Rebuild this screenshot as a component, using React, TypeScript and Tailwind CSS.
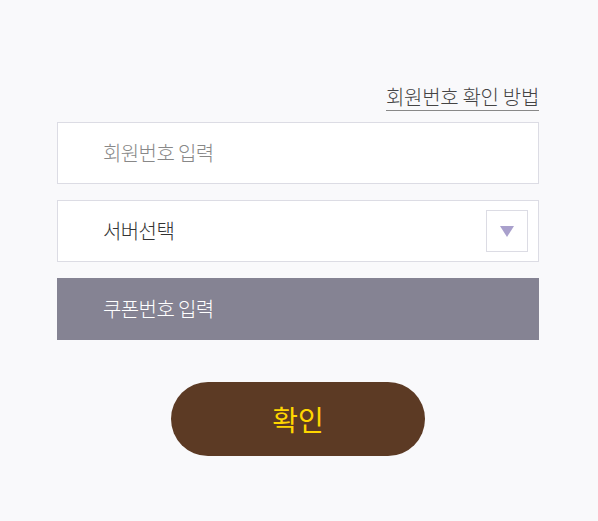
import React from "react";

export default function App() {
  return (
    <div
      className="min-h-[521px] w-full bg-[#f9f9fb] pt-[84px]"
      style={{ fontFamily: '"Noto Sans CJK KR", "Noto Sans", sans-serif' }}
    >
      <div className="ml-[57px] w-[482px] font-light">
        <div className="flex justify-end">
          <a className="border-b border-[#888] pb-[1px] text-[20px] leading-[25px] tracking-[-0.3px] text-[#444]">
            회원번호 확인 방법
          </a>
        </div>
        <div className="mt-[11px] flex h-[62px] items-center border border-[#dcdce4] bg-white pl-[45px] text-[20px] tracking-[-0.6px] text-[#888]">
          회원번호 입력
        </div>
        <div className="mt-[16px] flex h-[62px] items-center justify-between border border-[#dcdce4] bg-white pl-[45px] pr-[10px] text-[20px] tracking-[-0.6px] text-[#333]">
          <span>서버선택</span>
          <div className="flex h-[42px] w-[42px] items-center justify-center border border-[#dcdce4] bg-white">
            <svg width="14" height="11" viewBox="0 0 14 11">
              <polygon points="0,0 14,0 7,11" fill="#a9a0cc" />
            </svg>
          </div>
        </div>
        <div className="mt-[16px] flex h-[62px] items-center bg-[#858393] pl-[46px] text-[20px] tracking-[-0.6px] text-white">
          쿠폰번호 입력
        </div>
        <div className="mt-[42px] flex justify-center">
          <button className="h-[74px] w-[254px] rounded-full bg-[#5c3a24] text-[28px] font-normal text-[#ffd600]">
            확인
          </button>
        </div>
      </div>
    </div>
  );
}
